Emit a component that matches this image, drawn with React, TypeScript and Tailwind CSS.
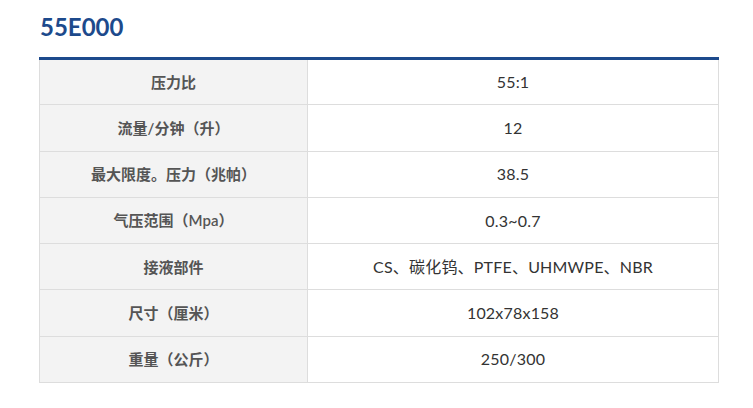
const rows: [string, string][] = [
  ["压力比", "55:1"],
  ["流量/分钟（升）", "12"],
  ["最大限度。压力（兆帕）", "38.5"],
  ["气压范围（Mpa）", "0.3~0.7"],
  ["接液部件", "CS、碳化钨、PTFE、UHMWPE、NBR"],
  ["尺寸（厘米）", "102x78x158"],
  ["重量（公斤）", "250/300"],
]

export default function App() {
  return (
    <div
      className="w-[753px] h-[408px] bg-white pl-[39px] pt-[12px]"
      style={{ fontFamily: 'Lato, "Noto Sans CJK SC", sans-serif' }}
    >
      <h1 className="text-[24px] leading-[30px] font-bold text-[#1d4a8c] pl-[1px]">55E000</h1>
      <table className="mt-[15px] w-[680px] border-collapse border-t-[3px] border-t-[#1d4a8c] text-[15px]">
        <tbody>
          {rows.map(([k, v]) => (
            <tr key={k} className="h-[46.3px]">
              <td className="w-[268px] bg-[#f3f3f3] border border-[#dddddd] border-t-0 text-center font-semibold text-[#555555]">
                {k}
              </td>
              <td className="border border-[#dddddd] text-center text-[#333333] text-[16px] tracking-[0.2px]">{v}</td>
            </tr>
          ))}
        </tbody>
      </table>
    </div>
  )
}
